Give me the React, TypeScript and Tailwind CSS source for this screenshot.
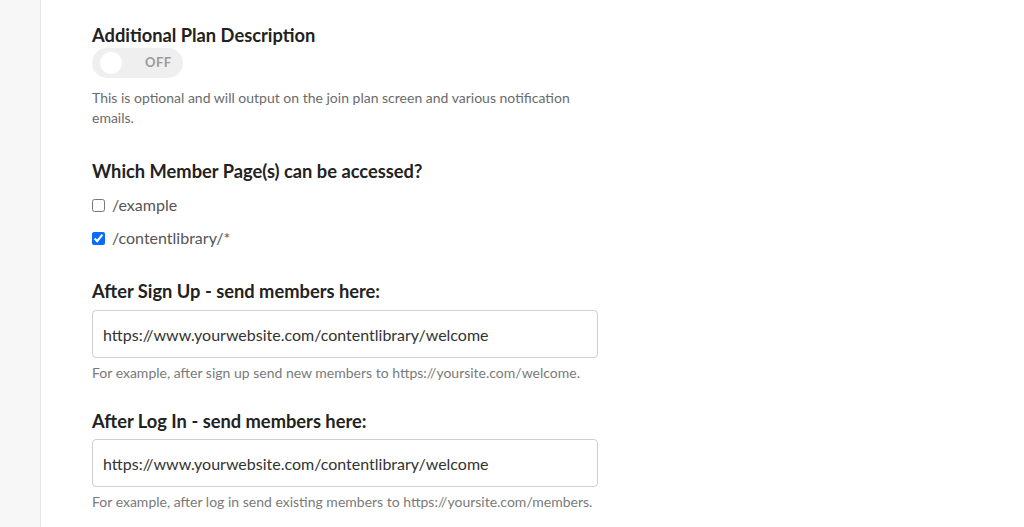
import React from "react";

export default function App() {
  const font = { fontFamily: "Lato, 'Noto Sans', sans-serif" };
  return (
    <div className="flex w-[1024px] h-[527px] overflow-hidden bg-white" style={font}>
      <div className="w-[41px] shrink-0 bg-[#f7f7f7] border-r border-[#e6e6e6]" />
      <div className="pl-[51px] flex flex-col w-[557px]">
        <h2 className="mt-[23px] text-[18.3px] leading-[24px] font-bold text-[#222]">Additional Plan Description</h2>
        <div className="mt-[1px] w-[91px] h-[30px] rounded-full bg-[#efefef] flex items-center px-[8px]">
          <div className="w-[22px] h-[22px] rounded-full bg-white" />
          <span className="ml-[23px] text-[13px] font-bold text-[#9a9a9a] tracking-[0.5px]">OFF</span>
        </div>
        <p className="mt-[10px] text-[14px] leading-[20px] text-[#6b6b6b] w-[490px]">
          This is optional and will output on the join plan screen and various notification emails.
        </p>
        <h2 className="mt-[31px] text-[18.3px] leading-[24px] font-bold text-[#222]">Which Member Page(s) can be accessed?</h2>
        <label className="mt-[10px] h-[24px] flex items-center text-[16px] text-[#555]">
          <input type="checkbox" className="w-[13px] h-[13px] mr-[7px]" />
          /example
        </label>
        <label className="mt-[9px] h-[24px] flex items-center text-[16px] text-[#555]">
          <input type="checkbox" defaultChecked className="w-[13px] h-[13px] mr-[7px] accent-[#0a6cff]" />
          /contentlibrary/*
        </label>
        <h2 className="mt-[29px] text-[18.3px] leading-[24px] font-bold text-[#222]">After Sign Up - send members here:</h2>
        <input
          type="text"
          defaultValue="https://www.yourwebsite.com/contentlibrary/welcome"
          className="mt-[7px] w-[506px] h-[48px] border border-[#cfcfcf] rounded-[4px] px-[10px] text-[16px] text-[#333] outline-none"
          style={font}
        />
        <p className="mt-[5px] text-[14px] leading-[20px] text-[#7a7a7a]">
          For example, after sign up send new members to https://yoursite.com/welcome.
        </p>
        <h2 className="mt-[26px] text-[18.3px] leading-[24px] font-bold text-[#222]">After Log In - send members here:</h2>
        <input
          type="text"
          defaultValue="https://www.yourwebsite.com/contentlibrary/welcome"
          className="mt-[6px] w-[506px] h-[48px] border border-[#cfcfcf] rounded-[4px] px-[10px] text-[16px] text-[#333] outline-none"
          style={font}
        />
        <p className="mt-[5px] text-[14px] leading-[20px] text-[#7a7a7a]">
          For example, after log in send existing members to https://yoursite.com/members.
        </p>
      </div>
    </div>
  );
}
